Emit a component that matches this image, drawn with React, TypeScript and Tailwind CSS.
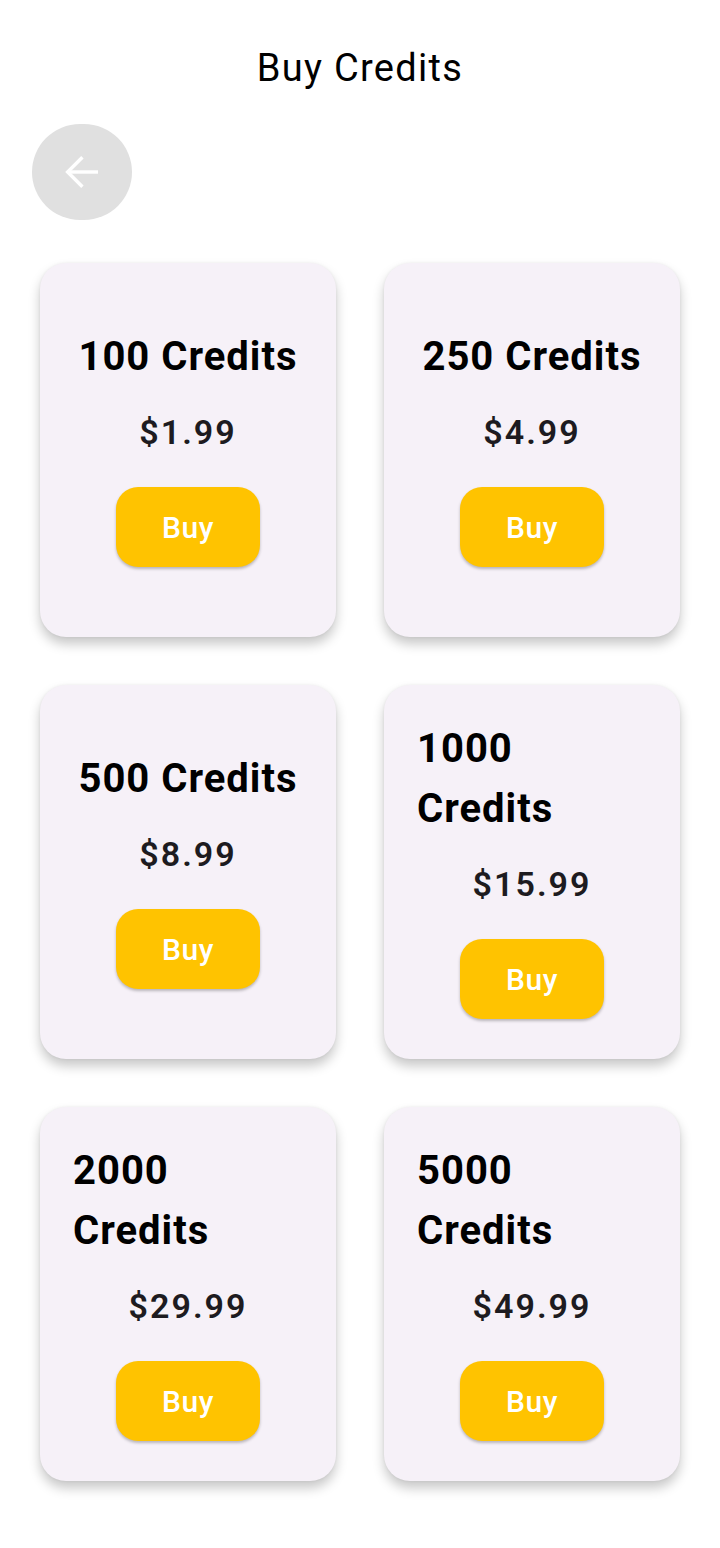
import React from "react";

const packs = [
  { credits: 100, price: "$1.99" },
  { credits: 250, price: "$4.99" },
  { credits: 500, price: "$8.99" },
  { credits: 1000, price: "$15.99" },
  { credits: 2000, price: "$29.99" },
  { credits: 5000, price: "$49.99" },
];

function Card({ credits, price }: { credits: number; price: string }) {
  return (
    <div className="h-[374px] rounded-[26px] bg-[#f6f1f8] shadow-[0_7px_12px_rgba(0,0,0,0.22),0_0_3px_rgba(0,0,0,0.06)] flex flex-col items-center justify-center px-[33px] pb-[6px]">
      <div className="text-left text-[40px] leading-[60px] font-bold tracking-[1px] text-black">
        {credits} Credits
      </div>
      <div className="mt-[25px] text-[34px] leading-[40px] font-semibold tracking-[2px] text-[#1d1b20]">
        {price}
      </div>
      <button className="mt-[35px] w-[144px] h-[80px] rounded-[22px] bg-[#ffc300] shadow-[0_2px_3px_rgba(0,0,0,0.25)] text-white text-[30px] font-medium tracking-[0.5px] flex items-center justify-center">
        Buy
      </button>
    </div>
  );
}

export default function App() {
  return (
    <div
      className="w-[720px] min-h-[1548px] bg-white"
      style={{ fontFamily: "Roboto, 'Noto Sans', sans-serif" }}
    >
      <div className="h-[124px] flex items-center justify-center pt-[12px]">
        <h1 className="text-[38px] font-normal tracking-[1.3px] text-black">Buy Credits</h1>
      </div>
      <div className="px-[32px]">
        <button className="w-[100px] h-[96px] rounded-full bg-[#e0e0e0] flex items-center justify-center">
          <svg width="48" height="48" viewBox="0 0 24 24" fill="none" stroke="white" strokeWidth="1.7" strokeLinecap="butt" strokeLinejoin="miter">
            <path d="M20 12H5.2" />
            <path d="M12.2 4.6 4.8 12l7.4 7.4" />
          </svg>
        </button>
      </div>
      <div className="grid grid-cols-2 gap-x-[48px] gap-y-[48px] px-[40px] pt-[43px]">
        {packs.map((p) => (
          <Card key={p.credits} credits={p.credits} price={p.price} />
        ))}
      </div>
    </div>
  );
}
